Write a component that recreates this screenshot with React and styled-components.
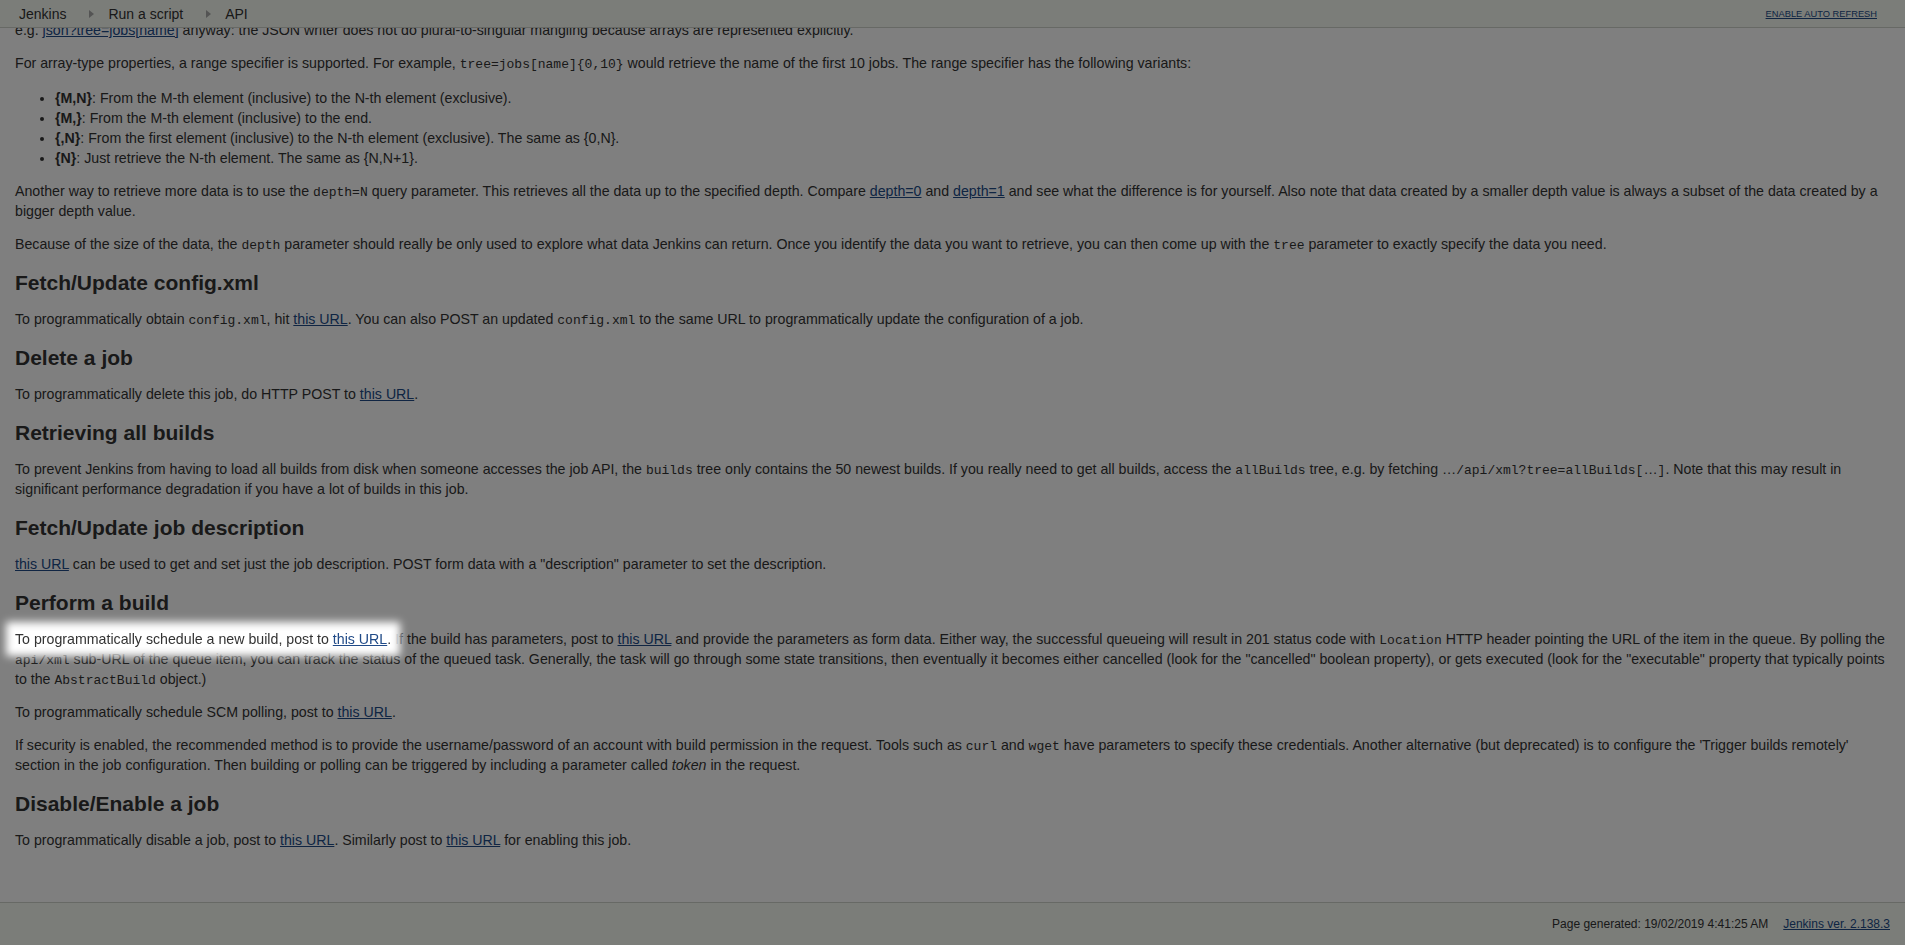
import styled, { createGlobalStyle } from "styled-components";

const GlobalStyle = createGlobalStyle`
    html, body{
        margin: 0;
        padding: 0;
        background: #fff;
    }
    body{
        font-family: "Liberation Sans", Arial, Helvetica, sans-serif;
        font-size: 14px;
        color: #333;
    }
`;

const Page = styled.div`
    display: flex;
    flex-direction: column;
    height: 100vh;
    overflow: hidden;
`;

const TopBar = styled.div`
    position: relative;
    z-index: 2;
    flex: 0 0 27px;
    display: flex;
    align-items: center;
    justify-content: space-between;
    padding: 0 28px 0 19px;
    background: #f6faf2;
    border-bottom: 1px solid #cfd3cb;
`;

const Crumbs = styled.ul`
    display: flex;
    align-items: center;
    list-style: none;
    margin: 0;
    padding: 0;
    font-size: 14px;
`;

const Crumb = styled.li`
    display: flex;
    align-items: center;
    color: #333;
`;

const CrumbArrow = styled.span`
    display: inline-block;
    width: 0;
    height: 0;
    margin: 0 14px 0 23px;
    border-left: 5px solid #a8a8a8;
    border-top: 4px solid transparent;
    border-bottom: 4px solid transparent;
`;

const AutoRefresh = styled.a`
    font-size: 9.3px;
    color: #204a87;
    text-decoration: underline;
    margin-top: 1px;
`;

const Main = styled.div`
    flex: 1;
    overflow: hidden;
`;

const Content = styled.div`
    margin-top: -8px;
    padding: 0 15px;
    font-size: 14.2px;
    line-height: 20px;
`;

const Para = styled.p`
    margin: 0 0 13px;
`;

const Heading = styled.h2`
    font-size: 21px;
    line-height: 24px;
    font-weight: bold;
    color: #333;
    margin: 17px 0 14px;
`;

const VariantList = styled.ul`
    margin: 15px 0 13px;
    padding-left: 40px;
`;

const Item = styled.li`
    line-height: 20px;
`;

const Code = styled.code`
    font-family: "Liberation Mono", "Courier New", monospace;
    font-size: 13px;
    line-height: 1;
`;

const Link = styled.a`
    color: #204a87;
    text-decoration: underline;
    cursor: pointer;
`;

const Spotlight = styled.span`
    position: relative;
    z-index: 20;
    background: #fff;
    box-shadow: 0 0 8px 9px #fff;
`;

const Footer = styled.div`
    flex: 0 0 42px;
    display: flex;
    align-items: center;
    justify-content: flex-end;
    gap: 15px;
    padding: 0 15px;
    background: #f6faf2;
    border-top: 1px solid #cfd3cb;
    font-size: 12px;
    color: #333;
`;

const Overlay = styled.div`
    position: fixed;
    inset: 0;
    z-index: 10;
    background: rgba(0, 0, 0, 0.5);
`;

const crumbs = ["Jenkins", "Run a script", "API"];

const variants = [
    ["{M,N}", "From the M-th element (inclusive) to the N-th element (exclusive)."],
    ["{M,}", "From the M-th element (inclusive) to the end."],
    ["{,N}", "From the first element (inclusive) to the N-th element (exclusive). The same as {0,N}."],
    ["{N}", "Just retrieve the N-th element. The same as {N,N+1}."],
];

const App = () => {
    return(
        <Page>
            <GlobalStyle />
            <TopBar>
                <Crumbs>
                    {crumbs.map((c, i) => (
                        <Crumb key={c}>
                            {c}
                            {i < crumbs.length - 1 && <CrumbArrow />}
                        </Crumb>
                    ))}
                </Crumbs>
                <AutoRefresh>ENABLE AUTO REFRESH</AutoRefresh>
            </TopBar>

            <Main>
                <Content>
                    <Para>
                        e.g. <Link>json?tree=jobs[name]</Link> anyway: the JSON writer does not do plural-to-singular mangling because arrays are represented explicitly.
                    </Para>
                    <Para>
                        For array-type properties, a range specifier is supported. For example, <Code>tree=jobs[name]{"{0,10}"}</Code> would retrieve the name of the first 10 jobs. The range specifier has the following variants:
                    </Para>
                    <VariantList>
                        {variants.map(([k, t]) => (
                            <Item key={k}><b>{k}</b>: {t}</Item>
                        ))}
                    </VariantList>
                    <Para>
                        Another way to retrieve more data is to use the <Code>depth=N</Code> query parameter. This retrieves all the data up to the specified depth. Compare <Link>depth=0</Link> and <Link>depth=1</Link> and see what the difference is for yourself. Also note that data created by a smaller depth value is always a subset of the data created by a bigger depth value.
                    </Para>
                    <Para>
                        Because of the size of the data, the <Code>depth</Code> parameter should really be only used to explore what data Jenkins can return. Once you identify the data you want to retrieve, you can then come up with the <Code>tree</Code> parameter to exactly specify the data you need.
                    </Para>

                    <Heading>Fetch/Update config.xml</Heading>
                    <Para>
                        To programmatically obtain <Code>config.xml</Code>, hit <Link>this URL</Link>. You can also POST an updated <Code>config.xml</Code> to the same URL to programmatically update the configuration of a job.
                    </Para>

                    <Heading>Delete a job</Heading>
                    <Para>
                        To programmatically delete this job, do HTTP POST to <Link>this URL</Link>.
                    </Para>

                    <Heading>Retrieving all builds</Heading>
                    <Para>
                        To prevent Jenkins from having to load all builds from disk when someone accesses the job API, the <Code>builds</Code> tree only contains the 50 newest builds. If you really need to get all builds, access the <Code>allBuilds</Code> tree, e.g. by fetching …<Code>/api/xml?tree=allBuilds[</Code>…<Code>]</Code>. Note that this may result in significant performance degradation if you have a lot of builds in this job.
                    </Para>

                    <Heading>Fetch/Update job description</Heading>
                    <Para>
                        <Link>this URL</Link> can be used to get and set just the job description. POST form data with a "description" parameter to set the description.
                    </Para>

                    <Heading>Perform a build</Heading>
                    <Para>
                        <Spotlight>To programmatically schedule a new build, post to <Link>this URL</Link>.</Spotlight> If the build has parameters, post to <Link>this URL</Link> and provide the parameters as form data. Either way, the successful queueing will result in 201 status code with <Code>Location</Code> HTTP header pointing the URL of the item in the queue. By polling the <Code>api/xml</Code> sub-URL of the queue item, you can track the status of the queued task. Generally, the task will go through some state transitions, then eventually it becomes either cancelled (look for the "cancelled" boolean property), or gets executed (look for the "executable" property that typically points to the <Code>AbstractBuild</Code> object.)
                    </Para>
                    <Para>
                        To programmatically schedule SCM polling, post to <Link>this URL</Link>.
                    </Para>
                    <Para>
                        If security is enabled, the recommended method is to provide the username/password of an account with build permission in the request. Tools such as <Code>curl</Code> and <Code>wget</Code> have parameters to specify these credentials. Another alternative (but deprecated) is to configure the 'Trigger builds remotely' section in the job configuration. Then building or polling can be triggered by including a parameter called <i>token</i> in the request.
                    </Para>

                    <Heading>Disable/Enable a job</Heading>
                    <Para>
                        To programmatically disable a job, post to <Link>this URL</Link>. Similarly post to <Link>this URL</Link> for enabling this job.
                    </Para>
                </Content>
            </Main>

            <Footer>
                <span>Page generated: 19/02/2019 4:41:25 AM</span>
                <Link>Jenkins ver. 2.138.3</Link>
            </Footer>

            <Overlay />
        </Page>
    );
}

export default App;
